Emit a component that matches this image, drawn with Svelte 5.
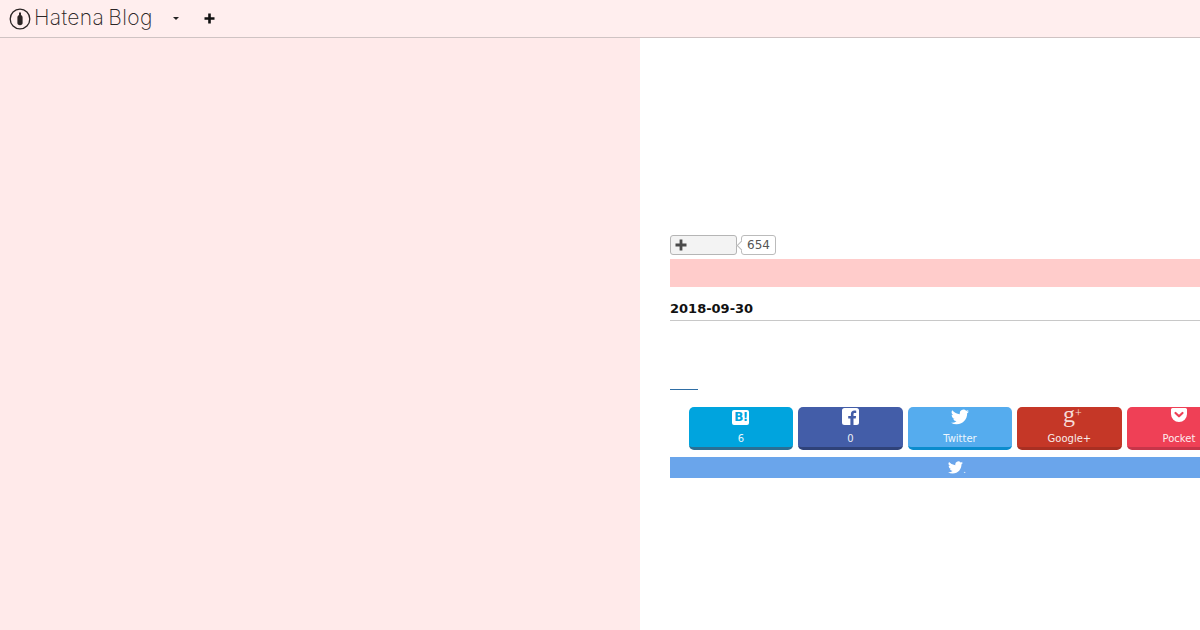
<script>
  const shares = [
    { cls: 'hatena', label: '6', icon: 'b' },
    { cls: 'facebook', label: '0', icon: 'f' },
    { cls: 'twitter', label: 'Twitter', icon: 't' },
    { cls: 'google', label: 'Google+', icon: 'g' },
    { cls: 'pocket', label: 'Pocket', icon: 'p' }
  ];
  const bird = 'M23.95 4.57a10 10 0 0 1-2.82.77 4.96 4.96 0 0 0 2.16-2.72 9.9 9.9 0 0 1-3.12 1.18 4.92 4.92 0 0 0-8.38 4.48A13.98 13.98 0 0 1 1.64 3.16a4.92 4.92 0 0 0 1.52 6.57 4.9 4.9 0 0 1-2.23-.61v.06a4.92 4.92 0 0 0 3.95 4.83 4.96 4.96 0 0 1-2.21.08 4.93 4.93 0 0 0 4.6 3.42A9.87 9.87 0 0 1 0 19.54a13.94 13.94 0 0 0 7.55 2.21c9.05 0 14-7.5 14-13.98 0-.21 0-.42-.02-.63a9.94 9.94 0 0 0 2.42-2.57z';
</script>

<div class="page">
  <header class="navbar">
    <a class="logo" href="#top">
      <svg class="logo-mark" viewBox="0 0 22 22" width="22" height="22" aria-hidden="true">
        <circle cx="11" cy="11" r="9.8" fill="none" stroke="#2b2525" stroke-width="1.3" />
        <path d="M10 4.500h2v2.500c1 .6 1.600 1.400 1.600 2.600V15c0 1.300-.9 2.200-2.600 2.200S8.400 16.300 8.400 15V9.600c0-1.200.6-2 1.600-2.600z" fill="#2b2525" />
      </svg>
      <span class="logo-text">Hatena Blog</span>
    </a>
    <span class="caret"></span>
    <svg class="nav-plus" viewBox="0 0 11 11" width="11" height="11" aria-hidden="true">
      <path d="M4.200 0.500h2.600v3.700h3.700v2.600H6.800v3.700H4.200V6.800H0.500V4.200h3.700z" fill="#111" />
    </svg>
  </header>

  <div class="columns">
    <aside class="side"></aside>
    <main class="content">
      <div class="star-row">
        <button class="star-btn" aria-label="add">
          <svg viewBox="0 0 12 12" width="12" height="12" aria-hidden="true">
            <path d="M4.600 0.500h2.800v4.100h4.100v2.800H7.400v4.100H4.600V7.400H0.500V4.600h4.100z" fill="#4a4a4a" />
          </svg>
        </button>
        <span class="count">654</span>
      </div>
      <div class="pink-bar"></div>
      <h2 class="date">2018-09-30</h2>
      <div class="link-line"></div>

      <div class="shares">
        {#each shares as s}
          <div class="share {s.cls}">
            <span class="icon">
              {#if s.icon === 'b'}
                <span class="hb">B!</span>
              {:else if s.icon === 'f'}
                <svg viewBox="0 0 17 17" width="17" height="17" aria-hidden="true">
                  <path fill="#fff" d="M2.500 0h12A2.500 2.500 0 0 1 17 2.500v12a2.500 2.500 0 0 1-2.500 2.500H11.500v-6.500h2.200l.4-2.600h-2.600V6.300c0-.8.300-1.300 1.300-1.300h1.400V2.700c-.4 0-1.100-.1-1.900-.1-2 0-3.400 1.200-3.400 3.400v1.900H6.200v2.600h2.200V17H2.500A2.500 2.500 0 0 1 0 14.500v-12A2.500 2.500 0 0 1 2.500 0z" />
                </svg>
              {:else if s.icon === 't'}
                <svg viewBox="0 0 24 24" width="18" height="18" aria-hidden="true"><path fill="#fff" d={bird} /></svg>
              {:else if s.icon === 'g'}
                <span class="gplus">g<span class="plus">+</span></span>
              {:else}
                <svg class="pocket-icon" viewBox="0 0 16 16" width="16" height="16" aria-hidden="true">
                  <path fill="#fff" d="M1.500 1h13A1.500 1.500 0 0 1 16 2.500V7A8 8 0 0 1 0 7V2.500A1.500 1.500 0 0 1 1.500 1z" />
                  <path fill="none" stroke="#ef4056" stroke-width="2.200" stroke-linecap="round" stroke-linejoin="round" d="M4.500 6L8 9.300 11.500 6" />
                </svg>
              {/if}
            </span>
            <span class="label">{s.label}</span>
          </div>
        {/each}
      </div>

      <div class="tweet-bar">
        <svg viewBox="0 0 24 24" width="15" height="15" aria-hidden="true"><path fill="#fff" d={bird} /></svg><span class="dot">.</span>
      </div>
    </main>
  </div>
</div>

<style>
  :global(body) {
    margin: 0;
  }
  .page {
    width: 1200px;
    height: 630px;
    overflow: hidden;
    background: #ffeaea;
    font-family: "DejaVu Sans", sans-serif;
  }
  .navbar {
    height: 37px;
    border-bottom: 1px solid #cfc3c3;
    background: #ffeeee;
    display: flex;
    align-items: center;
    padding-left: 9px;
  }
  .logo {
    display: flex;
    align-items: center;
    gap: 3px;
    color: #2b2525;
    text-decoration: none;
  }
  .logo-text {
    font-family: Inter, sans-serif;
    font-weight: 200;
    font-size: 21px;
    line-height: 24px;
    margin-top: -2px;
    letter-spacing: 0.35px;
    word-spacing: -2px;
    white-space: nowrap;
  }
  .caret {
    margin-left: 20px;
    width: 0;
    height: 0;
    border-left: 3px solid transparent;
    border-right: 3px solid transparent;
    border-top: 3px solid #222;
  }
  .nav-plus {
    margin-left: 25px;
    margin-top: -1px;
  }
  .columns {
    display: flex;
    height: 592px;
  }
  .side {
    width: 640px;
    flex: none;
    background: #ffeaea;
  }
  .content {
    flex: 1;
    min-width: 0;
    background: #fff;
    padding: 197px 0 0 30px;
    overflow: hidden;
  }
  .star-row {
    display: flex;
    align-items: center;
    gap: 4px;
    height: 20px;
  }
  .star-btn {
    width: 67px;
    height: 20px;
    box-sizing: border-box;
    padding: 0 0 0 4px;
    background: #f3f3f3;
    border: 1px solid #b5b5b5;
    border-radius: 3px;
    display: flex;
    align-items: center;
  }
  .count {
    position: relative;
    box-sizing: border-box;
    height: 20px;
    padding: 0 5px;
    border: 1px solid #bbb;
    border-radius: 3px;
    font-size: 12px;
    line-height: 18px;
    color: #555;
    background: #fff;
  }
  .count::before {
    content: "";
    position: absolute;
    left: -4px;
    top: 6px;
    width: 6px;
    height: 6px;
    background: #fff;
    border-left: 1px solid #bbb;
    border-bottom: 1px solid #bbb;
    transform: rotate(45deg);
  }
  .pink-bar {
    margin-top: 4px;
    height: 28px;
    background: #ffcccb;
  }
  .date {
    margin: 13px 0 0;
    height: 20px;
    border-bottom: 1px solid #c8c8c8;
    font-size: 13px;
    line-height: 17px;
    font-weight: 700;
    color: #111;
  }
  .link-line {
    margin-top: 68px;
    width: 28px;
    height: 1px;
    background: #2f6ea5;
  }
  .shares {
    display: flex;
    gap: 5px;
    margin-top: 17px;
    margin-left: 18.700px;
    width: 600px;
  }
  .share {
    flex: 0 0 104.500px;
    height: 43px;
    box-sizing: border-box;
    border-radius: 5px;
    border-bottom: 3px solid;
    display: flex;
    flex-direction: column;
    align-items: center;
    color: #fff;
  }
  .icon {
    height: 22px;
    margin-top: 1px;
    display: flex;
    align-items: flex-start;
    justify-content: center;
  }
  .label {
    margin-top: 2px;
    font-size: 10px;
    line-height: 14px;
    opacity: 0.9;
  }
  .hatena { background: #00a4de; border-color: #2a6f94; }
  .facebook { background: #435da8; border-color: #2f4279; }
  .twitter { background: #55acee; border-color: #0b8ccd; }
  .google { background: #c53727; border-color: #a82f22; }
  .pocket { background: #ef4056; border-color: #c73549; }
  .hb {
    margin-top: 2px;
    width: 17px;
    height: 15px;
    background: #fff;
    color: #00a4de;
    border-radius: 2px;
    font: 700 12px/15px "DejaVu Sans", sans-serif;
    text-align: center;
    letter-spacing: -0.5px;
  }
  .gplus {
    font: 400 24px/16px "Liberation Serif", serif;
    color: #f6dcd8;
    margin-top: -3px;
    padding-left: 6px;
  }
  .plus {
    font-size: 12px;
    vertical-align: 5px;
  }
  .pocket-icon {
    margin-top: -1px;
  }
  .tweet-bar {
    margin-top: 7px;
    width: 574px;
    height: 21px;
    background: #6aa5eb;
    display: flex;
    align-items: center;
    justify-content: center;
    color: #fff;
    font-size: 8px;
  }
  .dot {
    align-self: flex-end;
    line-height: 14px;
  }
</style>
